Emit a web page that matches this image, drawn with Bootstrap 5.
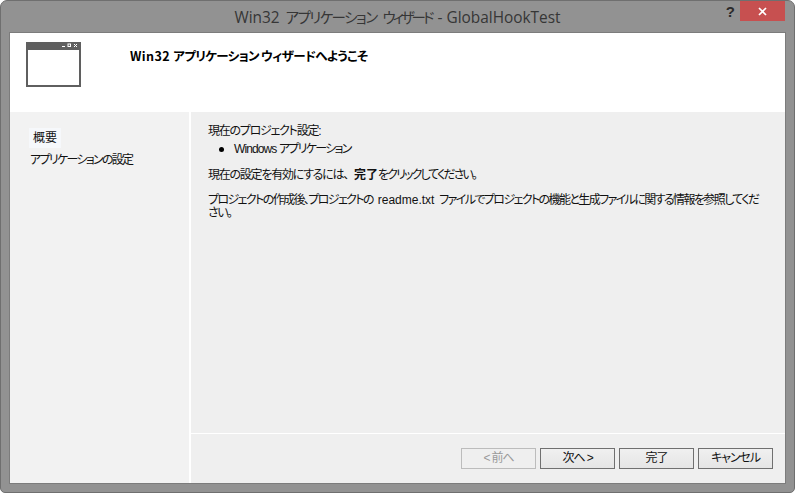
<!DOCTYPE html>
<html lang="ja"><head><meta charset="utf-8"><title>Win32</title>
<link rel="stylesheet" href="https://cdn.jsdelivr.net/npm/bootstrap@5.3.0/dist/css/bootstrap.min.css">
<style>
html,body{margin:0;height:493px;overflow:hidden;background:#fff}
body{font-family:"Liberation Sans","Noto Sans CJK JP",sans-serif;font-size:12px;line-height:12px;color:#111;font-feature-settings:"palt";letter-spacing:-1.25px}
.wiz-lat{letter-spacing:-.9px}
.wiz-kata{letter-spacing:-1.7px}
.wiz-win{width:795px;height:493px;background:#929292;border:1px solid #6f6f6f;border-radius:7px 7px 5px 5px;display:flex;flex-direction:column;padding:0 8px 8px 8px;overflow:hidden}
.wiz-title{height:31px;flex:none;display:flex;align-items:center;justify-content:center;gap:6px;position:relative;font-family:"Open Sans","Noto Sans CJK JP",sans-serif;font-size:15.4px;letter-spacing:0;color:#363636;padding-top:2px;white-space:nowrap}
.wiz-kana{font-size:14.5px;letter-spacing:-1.55px}
.wiz-kana2{font-size:14.5px;letter-spacing:-3px}
.wiz-help{position:absolute;right:51px;top:3px;font:bold 15px/16px "Liberation Sans",sans-serif;color:#2b2b2b}
.wiz-close{position:absolute;right:1px;top:0;width:45px;height:20px;background:#c75050;display:flex;align-items:center;justify-content:center}
.wiz-client{flex:1;min-height:0;display:flex;flex-direction:column;background:#fff;border:1px solid #7c7c7c}
.wiz-head{height:79px;flex:none;background:#fff;display:flex;padding:9px 0 0 16px}
.wiz-icon{width:55px;height:45px;border:2px solid #5f5f5f;border-top:8px solid #5f5f5f;background:#fff;position:relative;flex:none}
.wiz-icon svg{position:absolute;right:1px;top:-7px}
.wiz-heading{margin:7px 0 0 49px;font-family:"Noto Sans CJK JP",sans-serif;font-weight:700;font-size:12.5px;line-height:14px;color:#000;letter-spacing:-.65px}
.wiz-hlat{letter-spacing:.4px}
.wiz-body{flex:1;min-height:0;display:flex}
.wiz-side{width:179px;flex:none;background:#f2f2f2;padding:16px 0 0 19px}
.wiz-sel{width:32px;height:20px;background:#f6f8fb;padding:4px 0 0 4px;line-height:12px;margin-bottom:5px;letter-spacing:0}
.wiz-sideitem{line-height:14px;padding-left:1px}
.wiz-main{flex:1;margin-left:2px;background:#efefef;display:flex;flex-direction:column;min-width:0}
.wiz-content{flex:1;padding:13px 15px 0 17px;line-height:13px}
.wiz-content p{margin:0}
.wiz-bullet{display:flex;align-items:center;padding-left:11px;margin:5px 0 13px}
.wiz-dot{width:5px;height:5px;border-radius:50%;background:#000;margin-right:10px;flex:none}
.wiz-gap{margin-bottom:12px!important}
.wiz-strong{letter-spacing:0;margin:0 0 0 6px}
.wiz-rest{letter-spacing:-1.9px}
.wiz-para{letter-spacing:-1.6px;white-space:nowrap}
.wiz-file{letter-spacing:0;margin:0 3px}
.wiz-foot{height:50px;flex:none;border-top:1px solid #fff;display:flex;justify-content:flex-end;gap:4px;padding:14px 12px 0 0}
.wiz-btn{width:75px;height:21px;padding:0;border:1px solid #707070;border-radius:0;background:linear-gradient(#f0f0f0,#e5e5e5);font-size:12px;line-height:17px;color:#111;font-feature-settings:"palt";letter-spacing:-1.1px}
.wiz-btn:disabled{border-color:#bcbcbc;color:#9a9a9a;background:#efefef;opacity:1}
</style></head><body>
<div class="wiz-win">
 <div class="wiz-title"><span>Win32</span> <span class="wiz-kana">アプリケーション</span> <span class="wiz-kana2">ウィザード</span> <span>- GlobalHookTest</span>
  <span class="wiz-help">?</span>
  <span class="wiz-close"><svg width="11" height="9" viewBox="0 0 11 9"><path d="M2 1l7 7M9 1L2 8" stroke="#fff" stroke-width="1.7" fill="none"/></svg></span>
 </div>
 <div class="wiz-client">
  <div class="wiz-head">
   <div class="wiz-icon"><svg width="16" height="5" viewBox="0 0 16 5"><path d="M0 3.5h3" stroke="#fff"/><rect x="6" y="1" width="2.5" height="2.5" fill="none" stroke="#fff"/><path d="M12 1l3 3M15 1l-3 3" stroke="#fff"/></svg></div>
   <div class="wiz-heading"><span class="wiz-hlat">Win32 </span>アプリケーション ウィザードへようこそ</div>
  </div>
  <div class="wiz-body">
   <div class="wiz-side">
    <div class="wiz-sel">概要</div>
    <div class="wiz-sideitem wiz-kata">アプリケーションの設定</div>
   </div>
   <div class="wiz-main">
    <div class="wiz-content">
     <p>現在のプロジェクト設定:</p>
     <div class="wiz-bullet"><span class="wiz-dot"></span><span class="wiz-kata"><span class="wiz-lat">Windows </span>アプリケーション</span></div>
     <p class="wiz-gap">現在の設定を有効にするには、<b class="wiz-strong">完了</b><span class="wiz-rest">をクリックしてください。</span></p>
     <p class="wiz-para">プロジェクトの作成後、プロジェクトの <span class="wiz-file">readme.txt</span> ファイルでプロジェクトの機能と生成ファイルに関する情報を参照してくだ<br>さい。</p>
    </div>
    <div class="wiz-foot">
     <button class="btn wiz-btn" disabled>&lt; 前へ</button>
     <button class="btn wiz-btn">次へ &gt;</button>
     <button class="btn wiz-btn">完了</button>
     <button class="btn wiz-btn">キャンセル</button>
    </div>
   </div>
  </div>
 </div>
</div>
</body></html>
